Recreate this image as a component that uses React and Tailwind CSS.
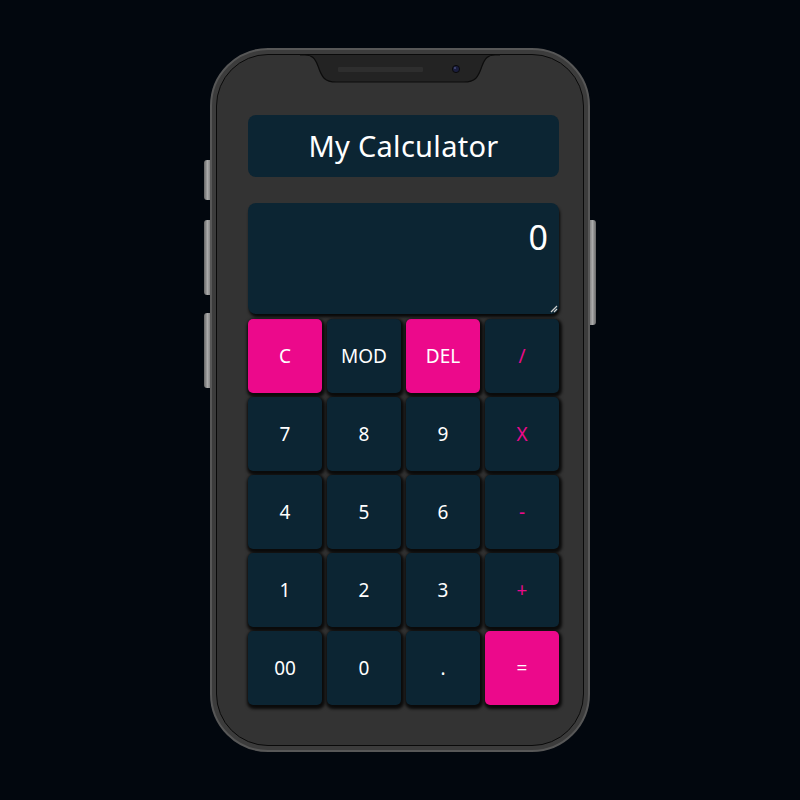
import React from "react";

const keys = [
  { l: "C", pink: true },
  { l: "MOD" },
  { l: "DEL", pink: true },
  { l: "/", op: true },
  { l: "7" },
  { l: "8" },
  { l: "9" },
  { l: "X", op: true },
  { l: "4" },
  { l: "5" },
  { l: "6" },
  { l: "-", op: true },
  { l: "1" },
  { l: "2" },
  { l: "3" },
  { l: "+", op: true },
  { l: "00" },
  { l: "0" },
  { l: "." },
  { l: "=", pink: true },
];

export default function App() {
  return (
    <div
      className="w-[800px] h-[800px] bg-[#02070e] flex items-center justify-center"
      style={{ fontFamily: '"Noto Sans", "Open Sans", sans-serif' }}
    >
      <div className="relative w-[380px] h-[704px]">
        {/* side buttons */}
        <div className="absolute left-[-6px] top-[112px] w-[7px] h-[40px] rounded-l-[3px] bg-gradient-to-r from-[#666] via-[#aaa] to-[#777]" />
        <div className="absolute left-[-6px] top-[172px] w-[7px] h-[75px] rounded-l-[3px] bg-gradient-to-r from-[#666] via-[#aaa] to-[#777]" />
        <div className="absolute left-[-6px] top-[265px] w-[7px] h-[75px] rounded-l-[3px] bg-gradient-to-r from-[#666] via-[#aaa] to-[#777]" />
        <div className="absolute right-[-6px] top-[172px] w-[7px] h-[105px] rounded-r-[3px] bg-gradient-to-l from-[#666] via-[#aaa] to-[#777]" />

        <div className="relative w-full h-full rounded-[58px] bg-[#3c3c3c] border-[2px] border-[#575757] p-[4px]">
          <div className="w-full h-full rounded-[52px] bg-[#333333] border border-[#0a0a0a] flex flex-col items-center pt-[60px] pl-[7px]">
            <div className="w-[311px] h-[62px] rounded-[8px] bg-[#0c2533] flex items-center justify-center text-white text-[29px] tracking-[0.3px]">
              My Calculator
            </div>
            <div className="relative mt-[26px] w-[311px] h-[111px] rounded-[8px] bg-[#0c2533] shadow-[1px_3px_3px_rgba(0,0,0,0.85)]">
              <div className="absolute right-[11px] top-[17px] text-white text-[34px] leading-none">0</div>
              <svg className="absolute right-[1px] bottom-[1px]" width="8" height="8" viewBox="0 0 8 8">
                <path d="M7 1 L1 7 M7 4 L4 7" stroke="#cfcfcf" strokeWidth="1.2" />
              </svg>
            </div>
            <div className="mt-[5px] grid grid-cols-[repeat(4,74px)] auto-rows-[74px] gap-x-[5px] gap-y-[4px]">
              {keys.map((k, i) => (
                <div
                  key={i}
                  className={`rounded-[5px] flex items-center justify-center text-[19px] shadow-[1px_2px_3px_2px_rgba(0,0,0,0.8)] ${
                    k.pink ? "bg-[#ec098b] text-white" : "bg-[#0c2533]"
                  } ${k.op ? "text-[#ec098b]" : k.pink ? "" : "text-white"}`}
                >
                  {k.l}
                </div>
              ))}
            </div>
          </div>
        </div>

        {/* notch */}
        <svg className="absolute left-[90px] top-[6px]" width="200" height="31" viewBox="0 0 200 31">
          <path
            d="M0 1 L5 1 C12 1 15 4 18 12 C22 24 25 28 36 28 L164 28 C175 28 178 24 182 12 C185 4 188 1 195 1 L200 1"
            fill="#232323"
            stroke="#0c0c0c"
            strokeWidth="1.2"
          />
          <rect x="38" y="13" width="85" height="5" rx="1" fill="#2e2e2e" />
          <circle cx="156" cy="15" r="3.6" fill="#1a1d3d" stroke="#0a0a0a" strokeWidth="1" />
          <circle cx="155" cy="14" r="1" fill="#4a4f7a" />
        </svg>
      </div>
    </div>
  );
}
